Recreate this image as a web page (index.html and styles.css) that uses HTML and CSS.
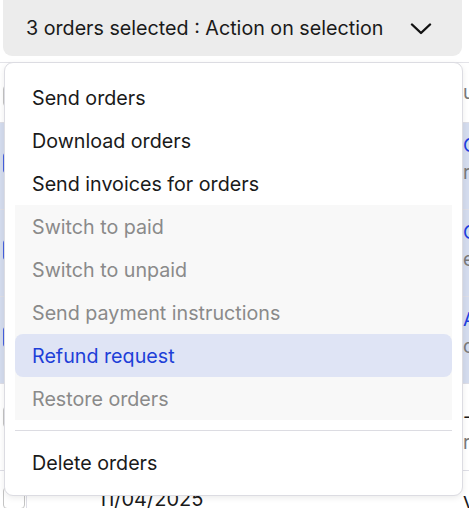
FILE: index.html
```html
<!DOCTYPE html>
<html>
<head>
<meta charset="utf-8">
<link rel="stylesheet" href="styles.css">
</head>
<body>
<div class="page">
  <button class="action-btn">
    <span class="action-label">3 orders selected : Action on selection</span>
    <svg class="chev" width="22" height="12" viewBox="0 0 22 12"><path d="M2 1.5 L11 10 L20 1.5" fill="none" stroke="#111" stroke-width="2.4" stroke-linecap="round" stroke-linejoin="round"/></svg>
  </button>

  <div class="table">
    <div class="row head">
      <span class="cb"></span>
      <span class="edge-text gray top28">u</span>
    </div>
    <div class="row sel">
      <span class="cb on"></span>
      <span class="edge-text blue top10">C</span>
      <span class="edge-text gray top38">r</span>
    </div>
    <div class="row sel">
      <span class="cb on"></span>
      <span class="edge-text blue top10">C</span>
      <span class="edge-text gray top38">e</span>
    </div>
    <div class="row sel">
      <span class="cb on"></span>
      <span class="edge-text blue top10">A</span>
      <span class="edge-text gray top38">c</span>
    </div>
    <div class="row">
      <span class="cb"></span>
      <span class="edge-text dark top22">-</span>
      <span class="edge-text gray top48">r</span>
    </div>
    <div class="row last">
      <span class="cb"></span>
      <span class="date">11/04/2025</span>
      <span class="edge-text dark top20">V</span>
    </div>
  </div>

  <div class="menu">
    <div class="item">Send orders</div>
    <div class="item">Download orders</div>
    <div class="item">Send invoices for orders</div>
    <div class="group">
      <div class="item disabled">Switch to paid</div>
      <div class="item disabled">Switch to unpaid</div>
      <div class="item disabled">Send payment instructions</div>
      <div class="item active">Refund request</div>
      <div class="item disabled">Restore orders</div>
    </div>
    <div class="sep"></div>
    <div class="item">Delete orders</div>
  </div>
</div>
</body>
</html>
```

FILE: styles.css
```css
* { box-sizing: border-box; }
html, body {
  margin: 0;
  padding: 0;
  background: #fff;
  overflow: hidden;
}
body {
  font-family: "Inter", "Liberation Sans", sans-serif;
  color: #1a1a1a;
  width: 469px;
  height: 508px;
}
.page {
  position: relative;
  width: 469px;
  height: 508px;
  overflow: hidden;
}
.action-btn {
  display: flex;
  align-items: center;
  justify-content: space-between;
  margin: -8px 0 0 3px;
  width: 459px;
  height: 64px;
  padding: 8px 30px 0 23px;
  border: none;
  border-radius: 9px;
  background: #ececec;
  font-family: inherit;
  font-size: 19.7px;
  color: #1a1a1a;
}
.chev { display: block; margin-top: 1px; }

.table {
  margin-top: 6px;
  border-top: 1px solid #e3e3e8;
}
.row {
  position: relative;
  height: 87px;
  border-bottom: 1px solid #dedee6;
}
.row.head { height: 60px; }
.row.sel { background: #d4dcee; }
.row .cb {
  position: absolute;
  left: 3px;
  top: 22px;
  width: 22px;
  height: 22px;
  border: 1.5px solid #c4c4c4;
  border-radius: 4px;
  background: #fff;
}
.row.sel .cb {
  top: 29px;
  background: #4660e0;
  border-color: #4660e0;
}
.row.last { border-bottom: none; }
.row.last::before {
  content: "";
  position: absolute;
  left: 26px;
  top: 0;
  bottom: 0;
  border-left: 1px solid #dedee6;
}
.row.last .cb { top: 16px; }
.edge-text {
  position: absolute;
  left: 463px;
  font-size: 19px;
  line-height: 22px;
}
.blue { color: #1f3fe0; }
.gray { color: #7a7a7a; }
.dark { color: #1a1a1a; }
.top10 { top: 12px; }
.top20 { top: 22px; }
.top22 { top: 22px; }
.top28 { top: 19px; }
.top38 { top: 39px; }
.top48 { top: 48px; }
.date {
  position: absolute;
  left: 98px;
  top: 16px;
  font-size: 20px;
  line-height: 24px;
  color: #1a1a1a;
}

.menu {
  position: absolute;
  left: 4px;
  top: 62px;
  width: 459px;
  padding: 13px 10px 11px;
  background: #fff;
  border: 1px solid #dcdce2;
  border-radius: 9px;
  box-shadow: 0 2px 6px rgba(0, 0, 0, 0.08);
}
.item {
  height: 43px;
  display: flex;
  align-items: center;
  padding-left: 17px;
  font-size: 19.7px;
  color: #1a1a1a;
}
.group { background: #f8f8f8; }
.item.disabled { color: #8a8a8a; }
.item.active {
  background: #dfe4f5;
  color: #1e3fd8;
  border-radius: 8px;
}
.sep {
  margin: 10px 0;
  border-top: 1px solid #dcdce2;
}
```
